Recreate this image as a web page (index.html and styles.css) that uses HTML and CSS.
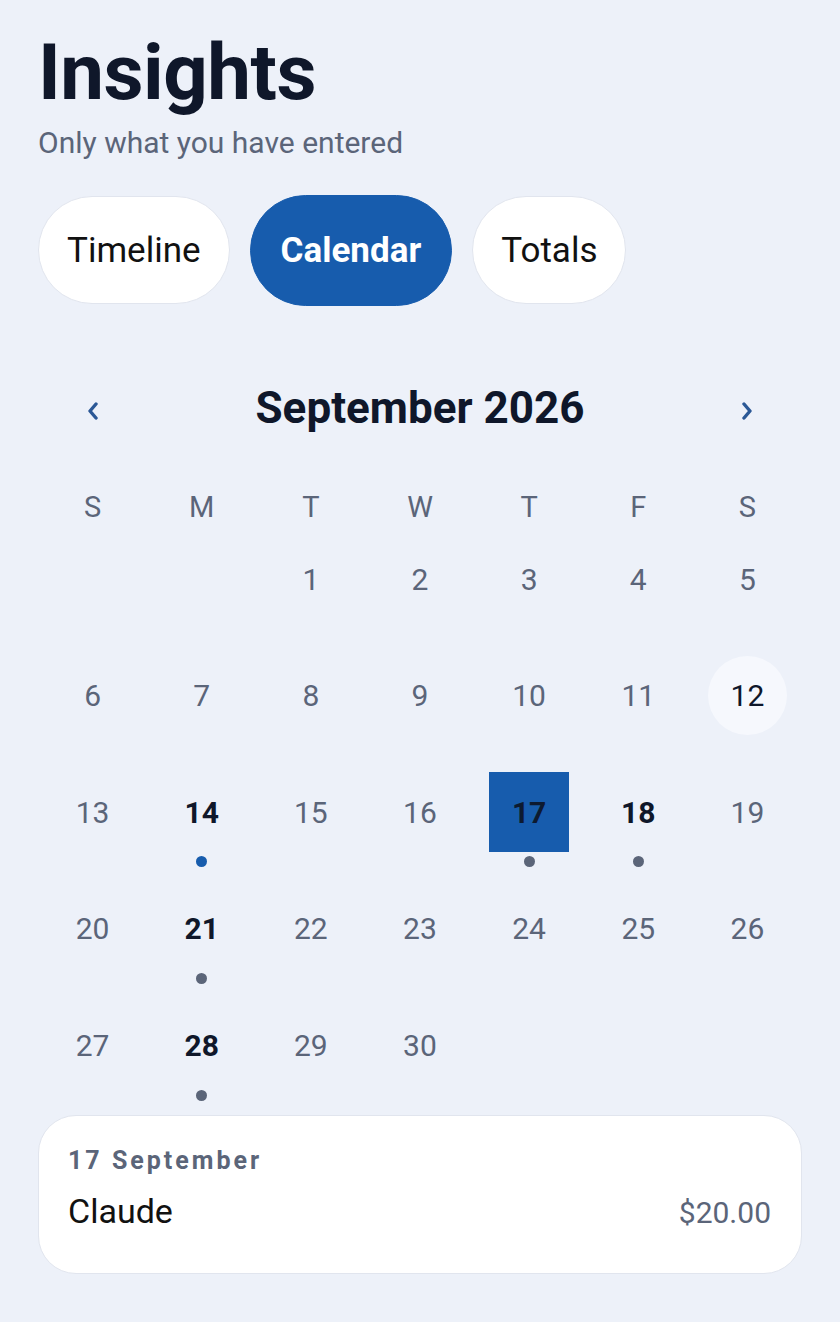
FILE: index.html
```html
<!DOCTYPE html>
<html lang="en">
<head>
<meta charset="utf-8">
<title>Insights</title>
<link rel="stylesheet" href="styles.css">
</head>
<body>
<main class="page">
  <h1 class="title">Insights</h1>
  <p class="subtitle">Only what you have entered</p>

  <nav class="tabs">
    <button class="tab">Timeline</button>
    <button class="tab active">Calendar</button>
    <button class="tab">Totals</button>
  </nav>

  <section class="calendar">
    <div class="month-head">
      <button class="nav prev" aria-label="Previous month">
        <svg width="12" height="18" viewBox="0 0 12 18"><path d="M9 2 L3 9 L9 16" fill="none" stroke="#2b5896" stroke-width="3.4" stroke-linecap="round" stroke-linejoin="round"/></svg>
      </button>
      <h2 class="month">September 2026</h2>
      <button class="nav next" aria-label="Next month">
        <svg width="12" height="18" viewBox="0 0 12 18"><path d="M3 2 L9 9 L3 16" fill="none" stroke="#2b5896" stroke-width="3.4" stroke-linecap="round" stroke-linejoin="round"/></svg>
      </button>
    </div>

    <div class="weekdays">
      <span>S</span><span>M</span><span>T</span><span>W</span><span>T</span><span>F</span><span>S</span>
    </div>

    <div class="days">
      <div class="day"></div>
      <div class="day"></div>
      <div class="day"><span class="num">1</span></div>
      <div class="day"><span class="num">2</span></div>
      <div class="day"><span class="num">3</span></div>
      <div class="day"><span class="num">4</span></div>
      <div class="day"><span class="num">5</span></div>

      <div class="day"><span class="num">6</span></div>
      <div class="day"><span class="num">7</span></div>
      <div class="day"><span class="num">8</span></div>
      <div class="day"><span class="num">9</span></div>
      <div class="day"><span class="num">10</span></div>
      <div class="day"><span class="num">11</span></div>
      <div class="day"><span class="num today">12</span></div>

      <div class="day"><span class="num">13</span></div>
      <div class="day"><span class="num strong">14</span><span class="dot blue"></span></div>
      <div class="day"><span class="num">15</span></div>
      <div class="day"><span class="num">16</span></div>
      <div class="day"><span class="num strong selected">17</span><span class="dot"></span></div>
      <div class="day"><span class="num strong">18</span><span class="dot"></span></div>
      <div class="day"><span class="num">19</span></div>

      <div class="day"><span class="num">20</span></div>
      <div class="day"><span class="num strong">21</span><span class="dot"></span></div>
      <div class="day"><span class="num">22</span></div>
      <div class="day"><span class="num">23</span></div>
      <div class="day"><span class="num">24</span></div>
      <div class="day"><span class="num">25</span></div>
      <div class="day"><span class="num">26</span></div>

      <div class="day"><span class="num">27</span></div>
      <div class="day"><span class="num strong">28</span><span class="dot"></span></div>
      <div class="day"><span class="num">29</span></div>
      <div class="day"><span class="num">30</span></div>
      <div class="day"></div>
      <div class="day"></div>
      <div class="day"></div>
    </div>
  </section>

  <section class="entry-card">
    <div class="entry-date">17 September</div>
    <div class="entry-row">
      <span class="entry-name">Claude</span>
      <span class="entry-amount">$20.00</span>
    </div>
  </section>
</main>
</body>
</html>
```

FILE: styles.css
```css
* { box-sizing: border-box; }

html, body {
  margin: 0;
  padding: 0;
  background: #edf1f9;
}

body {
  font-family: Roboto, "Liberation Sans", Arial, sans-serif;
  color: #0f172a;
}

.page {
  width: 840px;
  min-height: 1322px;
  padding: 34px 38px 0;
}

.title {
  margin: 0;
  font-size: 78px;
  line-height: 78px;
  font-weight: 700;
  color: #0f172a;
  letter-spacing: -0.5px;
}

.subtitle {
  margin: 13px 0 0;
  font-size: 30px;
  line-height: 36px;
  color: #5b6579;
}

.tabs {
  margin-top: 34px;
  height: 110px;
  display: flex;
  align-items: center;
  gap: 20px;
}

.tab {
  height: 108px;
  padding: 0 28px;
  border: 1px solid #e1e5ee;
  border-radius: 999px;
  background: #ffffff;
  font-family: inherit;
  font-size: 35px;
  color: #111111;
}

.tab.active {
  height: 111px;
  padding: 0 30px;
  border-color: #175cad;
  background: #175cad;
  color: #ffffff;
  font-weight: 700;
}

.calendar {
  margin-top: 73px;
}

.month-head {
  display: grid;
  grid-template-columns: repeat(7, 1fr);
  height: 60px;
  align-items: center;
}

.nav {
  border: 0;
  background: transparent;
  padding: 0;
  display: flex;
  justify-content: center;
  align-items: center;
  height: 60px;
  padding-top: 6px;
}

.month {
  grid-column: 2 / 7;
  margin: 0;
  text-align: center;
  font-size: 44px;
  line-height: 60px;
  font-weight: 700;
  color: #0f172a;
}

.weekdays {
  margin-top: 49px;
  display: grid;
  grid-template-columns: repeat(7, 1fr);
  height: 40px;
  align-items: center;
  text-align: center;
  font-size: 29px;
  line-height: 40px;
  color: #5b6579;
}

.days {
  margin-top: 12px;
  display: grid;
  grid-template-columns: repeat(7, 1fr);
  grid-auto-rows: 96px;
  row-gap: 20.67px;
}

.day {
  display: flex;
  flex-direction: column;
  align-items: center;
}

.num {
  width: 80px;
  height: 80px;
  display: flex;
  align-items: center;
  justify-content: center;
  font-size: 30px;
  color: #5b6579;
}

.num.strong {
  font-weight: 700;
  color: #0f172a;
}

.num.today {
  width: 79px;
  height: 79px;
  border-radius: 50%;
  background: #f6f8fd;
  color: #0f172a;
}

.num.selected {
  background: #175cad;
  color: #0d1a30;
}

.dot {
  width: 11px;
  height: 11px;
  margin-top: 4px;
  border-radius: 50%;
  background: #5b6579;
}

.dot.blue {
  background: #175cad;
}

.entry-card {
  margin-top: 13.3px;
  background: #ffffff;
  border: 1px solid #e1e5ee;
  border-radius: 38px;
  padding: 30px 30px 40px 29px;
}

.entry-date {
  font-size: 25px;
  line-height: 30px;
  font-weight: 700;
  letter-spacing: 3px;
  color: #5b6579;
}

.entry-row {
  margin-top: 14.7px;
  display: flex;
  justify-content: space-between;
  align-items: baseline;
  line-height: 40px;
}

.entry-name {
  font-size: 34px;
  color: #111111;
}

.entry-amount {
  font-size: 30px;
  color: #5b6579;
}
```
